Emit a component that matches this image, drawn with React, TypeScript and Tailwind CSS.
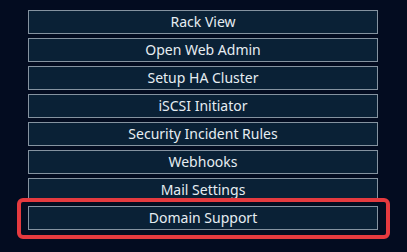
import React from "react";

const items = [
  "Rack View",
  "Open Web Admin",
  "Setup HA Cluster",
  "iSCSI Initiator",
  "Security Incident Rules",
  "Webhooks",
  "Mail Settings",
  "Domain Support",
];

export default function App() {
  return (
    <div
      className="w-[407px] h-[252px] bg-[#030c20] overflow-hidden"
      style={{ fontFamily: '"Noto Sans", "Open Sans", sans-serif' }}
    >
      <div className="ml-[28px] pt-[10px] w-[350px] flex flex-col gap-[4px]">
        {items.map((t, i) => (
          <div key={t} className="relative">
            <div className="h-[24px] border border-[#8593a0] bg-[#0a2136] text-[#e6edf2] text-[14px] leading-[22px] text-center">
              {t}
            </div>
            {i === items.length - 1 && (
              <div className="absolute left-[-11px] right-[-12px] top-[-8px] bottom-[-9px] border-[4px] border-[#e53a3f] rounded-[6px]" />
            )}
          </div>
        ))}
      </div>
    </div>
  );
}
